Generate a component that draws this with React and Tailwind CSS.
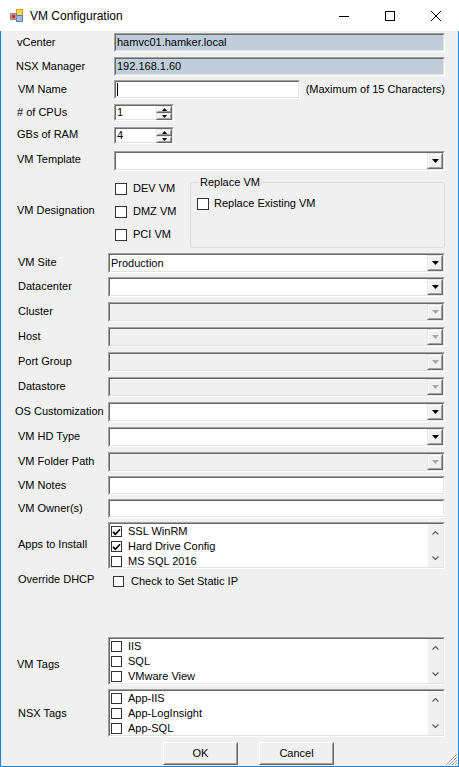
import React from "react";

function Sunken({ className = "", inner = "", children }) {
  return (
    <div className={"flex border border-t-[#a0a0a0] border-l-[#a0a0a0] border-b-white border-r-white " + className}>
      <div className={"flex min-w-0 flex-1 border border-t-[#696969] border-l-[#696969] border-b-[#e3e3e3] border-r-[#e3e3e3] " + inner}>
        {children}
      </div>
    </div>
  );
}

function Raised({ className = "", children }) {
  return (
    <div className={"flex border border-t-[#e3e3e3] border-l-[#e3e3e3] border-b-[#696969] border-r-[#696969] " + className}>
      <div className="flex flex-1 items-center justify-center border border-t-white border-l-white border-b-[#a0a0a0] border-r-[#a0a0a0] bg-[#f0f0f0]">
        {children}
      </div>
    </div>
  );
}

function TextBox({ value, className = "flex-1", bg = "bg-white", caret }) {
  return (
    <Sunken className={"h-[19px] " + className} inner={bg + " items-center"}>
      {caret && <div className="ml-[1px] h-[13px] w-px bg-black" />}
      {value && <span className="whitespace-nowrap pl-[1px] leading-[13px]">{value}</span>}
    </Sunken>
  );
}

function Tri({ disabled, up, w = 7, h = 4 }) {
  const pts = up ? `0,${h} ${w},${h} ${w / 2},0` : `0,0 ${w},0 ${w / 2},${h}`;
  return (
    <svg width={w} height={h} viewBox={`0 0 ${w} ${h}`}>
      <polygon points={pts} fill={disabled ? "#a6a6a6" : "#000"} />
    </svg>
  );
}

function Combo({ value, disabled }) {
  return (
    <Sunken className="h-[20px] flex-1" inner={disabled ? "bg-[#f0f0f0]" : "bg-white"}>
      <div className="flex flex-1 items-center pl-[1px] leading-[13px]">{value}</div>
      <Raised className="w-[16px]">
        <Tri disabled={disabled} w={7} h={4} />
      </Raised>
    </Sunken>
  );
}

function Spin({ value }) {
  return (
    <Sunken className="h-[17px] w-[60px]" inner="bg-white">
      <div className="flex flex-1 items-center pl-[1px] leading-[13px]">{value}</div>
      <div className="flex w-[16px] flex-col">
        <Raised className="flex-1">
          <Tri up w={5} h={3} />
        </Raised>
        <Raised className="flex-1">
          <Tri w={5} h={3} />
        </Raised>
      </div>
    </Sunken>
  );
}

function Check({ checked, size = "h-[12px] w-[12px]" }) {
  return (
    <div className={"flex shrink-0 items-center justify-center border border-[#333333] bg-white " + size}>
      {checked && (
        <svg width="9" height="8" viewBox="0 0 9 8">
          <polyline points="1,3.8 3.4,6.3 8,1.2" fill="none" stroke="#000" strokeWidth="1.7" />
        </svg>
      )}
    </div>
  );
}

function Chevron({ up }) {
  return (
    <svg width="7" height="4" viewBox="0 0 7 4">
      <polyline
        points={up ? "0.5,3.5 3.5,0.6 6.5,3.5" : "0.5,0.5 3.5,3.4 6.5,0.5"}
        fill="none"
        stroke="#606060"
        strokeWidth="1.3"
      />
    </svg>
  );
}

function CheckList({ items, height = "h-[48px]" }) {
  return (
    <Sunken className={"flex-1 " + height} inner="bg-white">
      <div className="flex flex-1 flex-col">
        {items.map(([t, c]) => (
          <div key={t} className="flex h-[15px] shrink-0 items-center">
            <Check checked={c} size="ml-[1px] h-[11px] w-[11px]" />
            <span className="ml-[6px] whitespace-nowrap leading-[13px]">{t}</span>
          </div>
        ))}
      </div>
      <div className="flex w-[15px] flex-col items-center justify-between bg-[#f0f0f0] py-[7px]">
        <Chevron up />
        <Chevron />
      </div>
    </Sunken>
  );
}

function Row({ className = "", label, lw = "w-[107px]", lp = "pl-[17px]", ly = "", children }) {
  return (
    <div className={"flex shrink-0 items-center " + className}>
      <div className={"shrink-0 whitespace-nowrap leading-[13px] " + lw + " " + lp + " " + ly}>{label}</div>
      {children}
    </div>
  );
}

function AppIcon() {
  return (
    <svg width="13" height="13" viewBox="0 0 13 13">
      <rect x="6.5" y="0.5" width="6" height="6" fill="#f7d54a" stroke="#c9a227" />
      <rect x="6.5" y="6.5" width="6" height="6" fill="#9dbbe4" stroke="#5f7fb3" />
      <rect x="0.5" y="4.5" width="6" height="6" fill="#d9d9d9" stroke="#8a8a8a" />
      <rect x="1.5" y="5.5" width="4" height="4" fill="#c62f2f" />
    </svg>
  );
}

function TitleBar() {
  return (
    <div className="flex h-[31px] shrink-0 items-center bg-white">
      <div className="ml-[10px] flex">
        <AppIcon />
      </div>
      <div className="ml-[7px] text-[12px] leading-[16px]">VM Configuration</div>
      <div className="ml-auto flex h-full">
        <div className="flex w-[46px] items-center justify-center">
          <svg width="10" height="10" viewBox="0 0 10 10">
            <line x1="0" y1="5.5" x2="10" y2="5.5" stroke="#000" strokeWidth="1" />
          </svg>
        </div>
        <div className="flex w-[46px] items-center justify-center">
          <svg width="10" height="10" viewBox="0 0 10 10">
            <rect x="0.5" y="0.5" width="9" height="9" fill="none" stroke="#000" strokeWidth="1" />
          </svg>
        </div>
        <div className="flex w-[46px] items-center justify-center">
          <svg width="10" height="10" viewBox="0 0 10 10">
            <line x1="0" y1="0" x2="10" y2="10" stroke="#000" strokeWidth="1" />
            <line x1="10" y1="0" x2="0" y2="10" stroke="#000" strokeWidth="1" />
          </svg>
        </div>
      </div>
    </div>
  );
}

function Button({ children, className = "" }) {
  return (
    <div className={"flex h-[23px] w-[75px] border border-t-white border-l-white border-b-[#696969] border-r-[#696969] " + className}>
      <div className="flex flex-1 items-center justify-center border border-t-[#f0f0f0] border-l-[#f0f0f0] border-b-[#a0a0a0] border-r-[#a0a0a0] bg-[#f0f0f0] leading-[13px]">
        {children}
      </div>
    </div>
  );
}

function Grip() {
  return (
    <svg width="12" height="12" viewBox="0 0 12 12">
      <line x1="12" y1="1" x2="1" y2="12" stroke="#a8a8a8" strokeWidth="1" />
      <line x1="12" y1="4" x2="4" y2="12" stroke="#a8a8a8" strokeWidth="1" />
      <line x1="12" y1="7" x2="7" y2="12" stroke="#a8a8a8" strokeWidth="1" />
      <line x1="12" y1="10" x2="10" y2="12" stroke="#a8a8a8" strokeWidth="1" />
    </svg>
  );
}

export default function App() {
  return (
    <div className="flex h-[767px] w-[459px] flex-col overflow-hidden bg-[#f0f0f0] font-['Liberation_Sans',Arial,sans-serif] text-[11px] text-black">
      <TitleBar />
      <div className="flex flex-1 flex-col border-x border-b border-[#1883d7] pr-[13px]">
        <Row className="mt-[2px] h-[19px]" label="vCenter" lw="w-[113px]" lp="pl-[16px]">
          <TextBox value="hamvc01.hamker.local" bg="bg-[#bfcddb]" />
        </Row>
        <Row className="mt-[5px] h-[19px]" label="NSX Manager" lw="w-[113px]" lp="pl-[15px]">
          <TextBox value="192.168.1.60" bg="bg-[#bfcddb]" />
        </Row>
        <Row className="mt-[4px] h-[19px]" label="VM Name" lw="w-[113px]" lp="pl-[17px]">
          <TextBox caret className="w-[188px]" />
          <span className="ml-[6px] whitespace-nowrap leading-[13px]">(Maximum of 15 Characters)</span>
        </Row>
        <Row className="mt-[5px] h-[17px]" label="# of CPUs" lw="w-[113px]" lp="pl-[16px]">
          <Spin value="1" />
        </Row>
        <Row className="mt-[6px] h-[17px]" label="GBs of RAM" lw="w-[113px]" lp="pl-[16px]" ly="pb-[2px]">
          <Spin value="4" />
        </Row>
        <Row className="mt-[7px] h-[20px]" label="VM Template" lw="w-[113px]" lp="pl-[16px]" ly="pb-[3px]">
          <Combo />
        </Row>

        <div className="flex h-[82px] shrink-0 items-start">
          <div className="mt-[33px] w-[113px] shrink-0 whitespace-nowrap pl-[16px] leading-[13px]">VM Designation</div>
          <div className="flex w-[76px] shrink-0 flex-col">
            {["DEV VM", "DMZ VM", "PCI VM"].map((t, i) => (
              <div key={t} className={"flex h-[13px] items-center " + (i === 0 ? "mt-[11px]" : "mt-[10px]")}>
                <Check size="ml-[1px] h-[12px] w-[12px]" />
                <span className="ml-[6px] whitespace-nowrap leading-[13px]">{t}</span>
              </div>
            ))}
          </div>
          <fieldset className="mt-[5px] h-[72px] min-w-0 flex-1 rounded-[3px] border border-[#dcdcdc]">
            <legend className="ml-[8px] px-[1px] leading-[13px]">Replace VM</legend>
            <div className="ml-[6px] mt-[8px] flex h-[13px] items-center">
              <Check size="h-[12px] w-[12px]" />
              <span className="ml-[5px] whitespace-nowrap leading-[13px]">Replace Existing VM</span>
            </div>
          </fieldset>
        </div>

        <Row className="h-[20px]" label="VM Site" ly="pb-[2px]">
          <Combo value="Production" />
        </Row>
        <Row className="mt-[4px] h-[20px]" label="Datacenter" ly="pb-[2px]">
          <Combo />
        </Row>
        <Row className="mt-[5px] h-[20px]" label="Cluster" ly="pb-[2px]">
          <Combo disabled />
        </Row>
        <Row className="mt-[5px] h-[20px]" label="Host" ly="pb-[2px]">
          <Combo disabled />
        </Row>
        <Row className="mt-[5px] h-[20px]" label="Port Group" ly="pb-[2px]">
          <Combo disabled />
        </Row>
        <Row className="mt-[5px] h-[20px]" label="Datastore" ly="pb-[2px]">
          <Combo disabled />
        </Row>
        <Row className="mt-[5px] h-[20px]" label="OS Customization" lp="pl-[14px]" ly="pb-[2px]">
          <Combo />
        </Row>
        <Row className="mt-[5px] h-[20px]" label="VM HD Type" ly="pb-[2px]">
          <Combo />
        </Row>
        <Row className="mt-[5px] h-[20px]" label="VM Folder Path" ly="pb-[2px]">
          <Combo disabled />
        </Row>
        <Row className="mt-[4px] h-[19px]" label="VM Notes">
          <TextBox />
        </Row>
        <Row className="mt-[4px] h-[19px]" label="VM Owner(s)">
          <TextBox />
        </Row>
        <Row className="mt-[4px] h-[47px]" label="Apps to Install" ly="pb-[2px]">
          <CheckList
            height="h-[47px]"
            items={[
              ["SSL WinRM", true],
              ["Hard Drive Config", true],
              ["MS SQL 2016", false],
            ]}
          />
        </Row>
        <Row className="mt-[2px] h-[20px]" label="Override DHCP" lw="w-[112px]" ly="pb-[3px]">
          <Check size="h-[11px] w-[11px]" />
          <span className="ml-[7px] whitespace-nowrap leading-[13px]">Check to Set Static IP</span>
        </Row>
        <Row className="mt-[46px] h-[48px]" label="VM Tags" lp="pl-[16px]" ly="pt-[7px]">
          <CheckList
            items={[
              ["IIS", false],
              ["SQL", false],
              ["VMware View", false],
            ]}
          />
        </Row>
        <Row className="mt-[4px] h-[48px]" label="NSX Tags">
          <CheckList
            items={[
              ["App-IIS", false],
              ["App-LogInsight", false],
              ["App-SQL", false],
            ]}
          />
        </Row>
        <div className="mt-[5px] flex flex-1 items-start">
          <Button className="ml-[162px]">OK</Button>
          <Button className="ml-[21px]">Cancel</Button>
          <div className="-mr-[12px] ml-auto flex self-end pb-[1px]">
            <Grip />
          </div>
        </div>
      </div>
    </div>
  );
}
